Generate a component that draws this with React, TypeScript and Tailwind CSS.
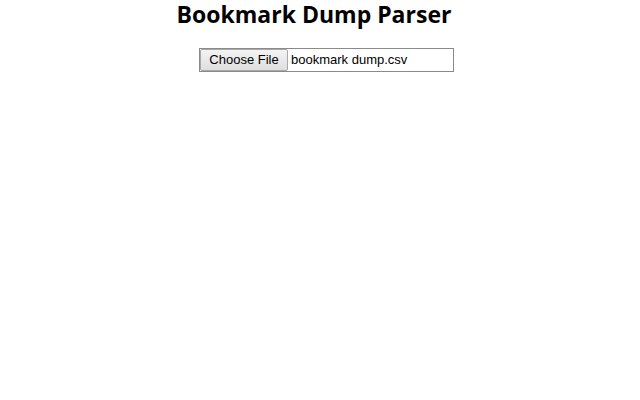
export default function App() {
  return (
    <div className="min-h-[400px] w-[640px] bg-white">
      <h1
        className="pr-[12px] text-center text-[23px] font-bold leading-[28px] text-black"
        style={{ fontFamily: '"Open Sans", sans-serif' }}
      >
        Bookmark Dump Parser
      </h1>
      <div className="mt-[20px] flex justify-center pl-[13px]">
        <div
          className="flex h-[24px] w-[255px] items-stretch border border-[#8a8a8a] bg-white"
          style={{ fontFamily: '"Liberation Sans", Arial, sans-serif' }}
        >
          <div className="flex w-[88px] items-center justify-center rounded-[2px] border border-[#a9a9a9] bg-gradient-to-b from-[#f3f3f3] to-[#dfdfdf] text-[13px] text-black">
            Choose File
          </div>
          <div className="flex items-center pl-[3px] text-[13px] text-black">
            bookmark dump.csv
          </div>
        </div>
      </div>
    </div>
  );
}
